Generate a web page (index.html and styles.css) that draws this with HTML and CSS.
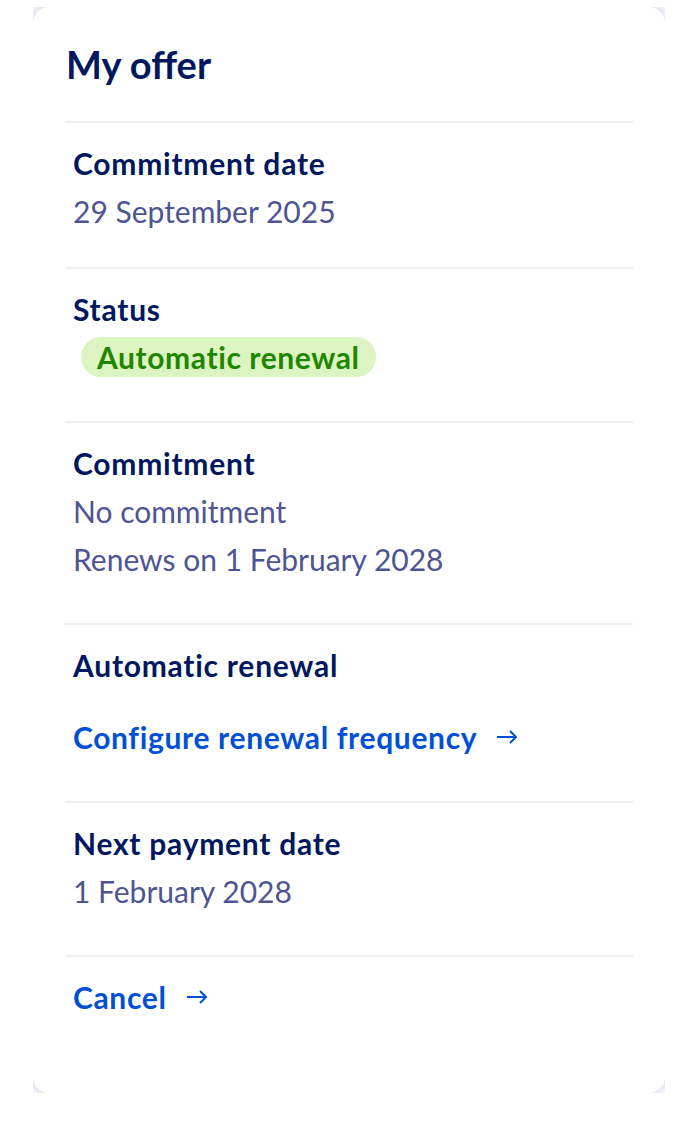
FILE: index.html
```html
<!DOCTYPE html>
<html>
<head>
    <title>My offer</title>
    <link rel="stylesheet" href="styles.css">
</head>
<body>
    <div class="card">
        <h2 class="card-title">My offer</h2>

        <div class="row row-short">
            <div class="label">Commitment date</div>
            <div class="value">29 September 2025</div>
        </div>

        <div class="row">
            <div class="label">Status</div>
            <span class="badge">Automatic renewal</span>
        </div>

        <div class="row">
            <div class="label">Commitment</div>
            <div class="value">No commitment</div>
            <div class="value">Renews on 1 February 2028</div>
        </div>

        <div class="row">
            <div class="label">Automatic renewal</div>
            <a class="link link-spaced" href="#">
                Configure renewal frequency
                <svg class="arrow" width="21" height="14" viewBox="0 0 21 14"><path d="M1 7H20M14 1L20 7L14 13" fill="none" stroke="currentColor" stroke-width="2"/></svg>
            </a>
        </div>

        <div class="row">
            <div class="label">Next payment date</div>
            <div class="value">1 February 2028</div>
        </div>

        <div class="row">
            <a class="link" href="#">
                Cancel
                <svg class="arrow" width="21" height="14" viewBox="0 0 21 14"><path d="M1 7H20M14 1L20 7L14 13" fill="none" stroke="currentColor" stroke-width="2"/></svg>
            </a>
        </div>
    </div>
</body>
</html>
```

FILE: styles.css
```css
body {
    font-family: Lato, "Open Sans", sans-serif;
    margin: 7px 31px 33px 33px;
    background-color: #ffffff;
}

.card {
    background-color: #ffffff;
    border-radius: 16px;
    box-shadow: 0 0 14px 2px rgba(0, 14, 156, 0.2);
    padding: 32px 32px 32px;
}

.card-title {
    margin: 0 0 32px;
    padding-left: 1px;
    font-size: 38px;
    line-height: 50px;
    font-weight: 700;
    color: #00185e;
}

.row {
    border-top: 2px solid #efefef;
    padding: 16px 8px 40px;
    font-size: 30px;
    line-height: 48px;
}

.row-short {
    padding-bottom: 32px;
}

.label {
    font-weight: 700;
    letter-spacing: 0.75px;
    color: #00185e;
}

.value {
    color: #4d5592;
}

.badge {
    display: inline-block;
    margin: 4px 0 4px 8px;
    padding: 0 16px;
    border-radius: 20px;
    line-height: 40px;
    font-weight: 700;
    letter-spacing: 0.6px;
    color: #1f8600;
    background-color: #dcf4c2;
}

.link {
    display: inline-flex;
    align-items: center;
    gap: 19px;
    font-weight: 700;
    letter-spacing: 0.65px;
    color: #0050d7;
    text-decoration: none;
}

.link-spaced {
    margin-top: 24px;
}

.arrow {
    display: block;
}
```
